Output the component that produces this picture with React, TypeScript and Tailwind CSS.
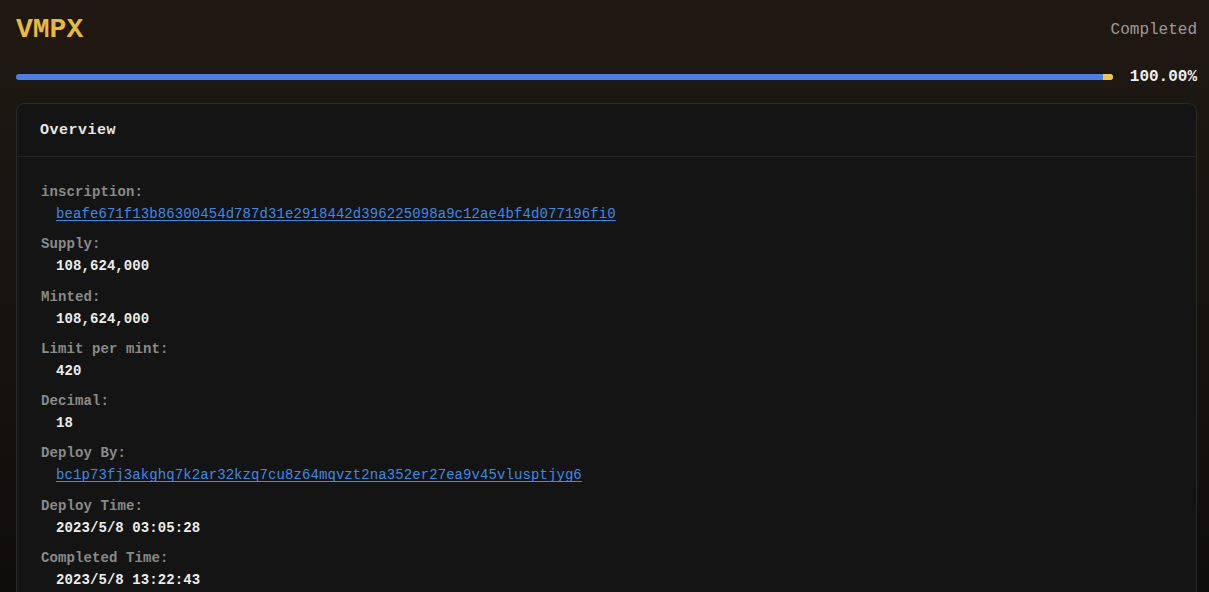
import React from "react";

const MONO = "font-['Liberation_Mono','DejaVu_Sans_Mono',monospace]";

type Row = { label: string; value: string; link?: boolean };

const ROWS: Row[] = [
  { label: "inscription:", value: "beafe671f13b86300454d787d31e2918442d396225098a9c12ae4bf4d077196fi0", link: true },
  { label: "Supply:", value: "108,624,000" },
  { label: "Minted:", value: "108,624,000" },
  { label: "Limit per mint:", value: "420" },
  { label: "Decimal:", value: "18" },
  { label: "Deploy By:", value: "bc1p73fj3akghq7k2ar32kzq7cu8z64mqvzt2na352er27ea9v45vlusptjyg6", link: true },
  { label: "Deploy Time:", value: "2023/5/8 03:05:28" },
  { label: "Completed Time:", value: "2023/5/8 13:22:43" },
];

function ProgressBar({ pct }: { pct: number }) {
  return (
    <div className="flex h-[34px] items-center gap-[17px]">
      <div className="relative h-[6px] flex-1 rounded-full bg-[#2a2520]">
        <div className="flex h-full rounded-full bg-[#4a80e8]" style={{ width: `${pct}%` }}>
          <div className="ml-auto h-full w-[10px] rounded-r-full bg-[#f2c544]" />
        </div>
      </div>
      <span className="text-[16px] font-bold leading-none text-[#f0f0f0]">{pct.toFixed(2)}%</span>
    </div>
  );
}

export default function App() {
  return (
    <div className={`${MONO} h-screen overflow-hidden bg-gradient-to-b from-[#201912] via-[#17130f] to-[#0f0d0c] pl-4 pr-3`}>
      <div className="flex h-[60px] items-center justify-between">
        <h1 className="text-[28px] font-bold leading-none text-[#e9b93c]">VMPX</h1>
        <span className="text-[16px] leading-none text-[#9b9b9b]">Completed</span>
      </div>
      <ProgressBar pct={100} />
      <div className="mt-[9px] rounded-lg border border-[#2a2a2a] bg-[#141414]">
        <div className="flex h-[53px] items-center border-b border-[#262626] px-[23px] pt-[3px]">
          <span className="text-[15px] font-bold tracking-[0.5px] text-[#e6e6e6]">Overview</span>
        </div>
        <div className="flex flex-col gap-[8px] px-[24px] pt-[24px] pb-6">
          {ROWS.map((r) => (
            <div key={r.label} className="flex flex-col">
              <span className="text-[14px] font-bold leading-[22px] tracking-[0.1px] text-[#8a8a8a]">{r.label}</span>
              {r.link ? (
                <a href="#" className="pl-[15px] text-[14px] leading-[22.3px] tracking-[0.08px] text-[#3d8ae8] underline underline-offset-2">
                  {r.value}
                </a>
              ) : (
                <span className="pl-[15px] text-[14px] font-bold leading-[22.3px] tracking-[0.08px] text-[#ececec]">{r.value}</span>
              )}
            </div>
          ))}
        </div>
      </div>
    </div>
  );
}
